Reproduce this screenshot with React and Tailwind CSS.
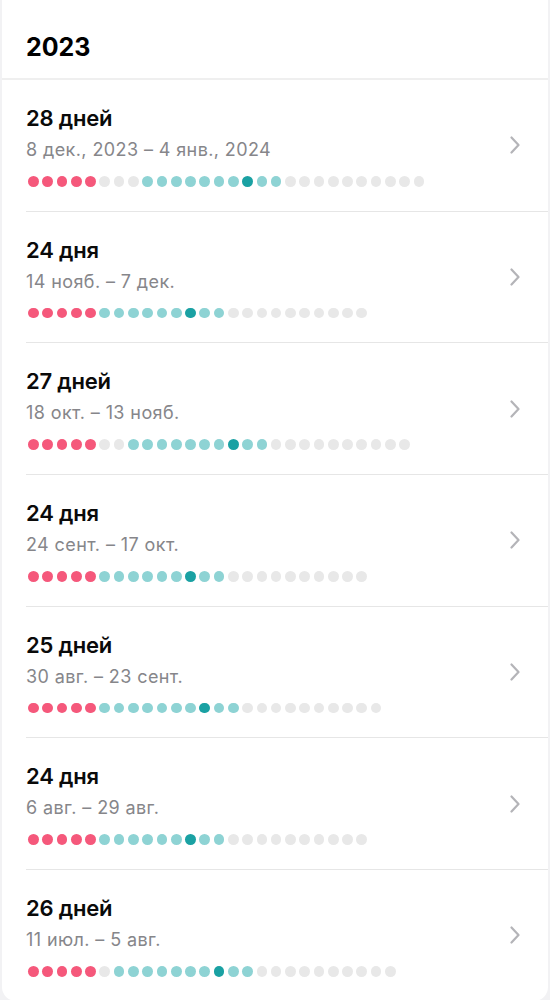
import React from 'react';

const cycles = [
  { title: '28 дней', range: '8 дек., 2023 – 4 янв., 2024', gap: 3, teal: 7 },
  { title: '24 дня', range: '14 нояб. – 7 дек.', gap: 0, teal: 6 },
  { title: '27 дней', range: '18 окт. – 13 нояб.', gap: 2, teal: 7 },
  { title: '24 дня', range: '24 сент. – 17 окт.', gap: 0, teal: 6 },
  { title: '25 дней', range: '30 авг. – 23 сент.', gap: 0, teal: 7 },
  { title: '24 дня', range: '6 авг. – 29 авг.', gap: 0, teal: 6 },
  { title: '26 дней', range: '11 июл. – 5 авг.', gap: 1, teal: 7 },
];

// period, gray gap, fertile window, ovulation, fertile tail, luteal rest
function buildDots(c) {
  const dots = [];
  for (let i = 0; i < 5; i++) dots.push('period');
  for (let i = 0; i < c.gap; i++) dots.push('empty');
  for (let i = 0; i < c.teal; i++) dots.push('fertile');
  dots.push('ovulation');
  dots.push('fertile', 'fertile');
  for (let i = 0; i < 10; i++) dots.push('empty');
  return dots;
}

const dotClass = {
  period: 'bg-[#f5587b]',
  empty: 'bg-[#e8e8e8]',
  fertile: 'bg-[#8ed3d4]',
  ovulation: 'bg-[#1aa1a3]',
};

function Chevron() {
  return (
    <svg width="12" height="18" viewBox="0 0 12 18" fill="none">
      <path d="M2.5 1.5L9.5 9L2.5 16.5" stroke="#b4b4b8" strokeWidth="2.2" strokeLinecap="round" strokeLinejoin="round" />
    </svg>
  );
}

function CycleRow({ cycle, first }) {
  const dots = buildDots(cycle);
  return (
    <div className="pl-6">
      <div className={first ? 'flex items-center' : 'flex items-center border-t border-[#e6e6e6]'}>
        <div className="flex-1 pt-[26px] pb-[24px]">
          <div className="text-[22px] leading-6 font-semibold text-[#0a0a0a] tracking-[-0.2px]">{cycle.title}</div>
          <div className="mt-[9px] text-[18px] leading-[22px] tracking-[0.4px] text-[#86868a]">{cycle.range}</div>
          <div className="mt-[15px] ml-[2px] flex gap-[3.6px]">
            {dots.map((d, i) => (
              <span key={i} className={'w-[10.7px] h-[10.7px] rounded-full ' + dotClass[d]} />
            ))}
          </div>
        </div>
        <div className="pr-[27px]">
          <Chevron />
        </div>
      </div>
    </div>
  );
}

export default function App() {
  return (
    <div className="min-h-screen bg-[#f2f2f4] px-[2px] pb-[5px]" style={{ fontFamily: 'Inter, "Noto Sans", sans-serif' }}>
      <div className="bg-white rounded-b-[14px] overflow-hidden">
        {/* Year header */}
        <div className="h-[80px] pl-6 pt-[33px] border-b-2 border-[#efefef]">
          <h1 className="text-[25px] font-bold text-black leading-7">2023</h1>
        </div>
        {cycles.map((c, i) => (
          <CycleRow key={i} cycle={c} first={i === 0} />
        ))}
      </div>
    </div>
  );
}
